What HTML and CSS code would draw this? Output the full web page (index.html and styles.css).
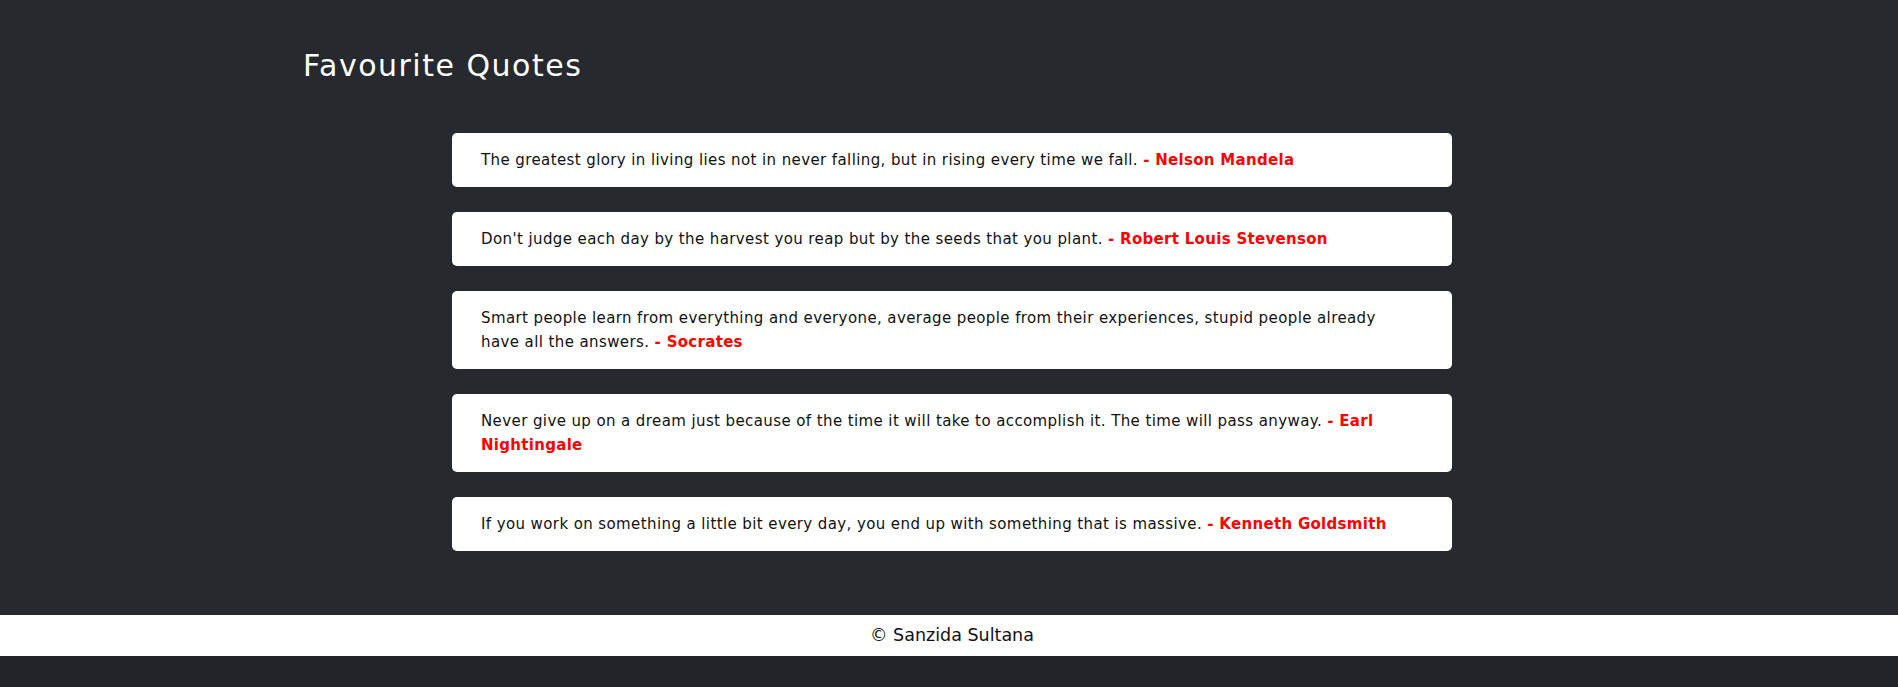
FILE: index.html
```html
<!DOCTYPE html>
<html lang="en">
<head>
<meta charset="utf-8">
<title>Favourite Quotes</title>
<link rel="stylesheet" href="styles.css">
</head>
<body>
<main class="quotes-section">
  <div class="container">
    <h1 class="title">Favourite Quotes</h1>
    <div class="quote-list">
      <div class="quote-card"><p>The greatest glory in living lies not in never falling, but in rising every time we fall. <strong>- Nelson Mandela</strong></p></div>
      <div class="quote-card"><p>Don't judge each day by the harvest you reap but by the seeds that you plant. <strong>- Robert Louis Stevenson</strong></p></div>
      <div class="quote-card"><p>Smart people learn from everything and everyone, average people from their experiences, stupid people already have all the answers. <strong>- Socrates</strong></p></div>
      <div class="quote-card"><p>Never give up on a dream just because of the time it will take to accomplish it. The time will pass anyway. <strong>- Earl Nightingale</strong></p></div>
      <div class="quote-card"><p>If you work on something a little bit every day, you end up with something that is massive. <strong>- Kenneth Goldsmith</strong></p></div>
    </div>
  </div>
</main>
<footer class="footer">
  <p>© Sanzida Sultana</p>
</footer>
</body>
</html>
```

FILE: styles.css
```css
* { box-sizing: border-box; }
html, body { margin: 0; padding: 0; }
body {
  background: #212529;
  font-family: "DejaVu Sans", "Liberation Sans", sans-serif;
  color: #000;
}
.quotes-section {
  background: #262a2e;
  padding: 48px 0 64px;
}
.container {
  max-width: 1320px;
  margin: 0 auto;
  padding: 0 12px;
}
.title {
  margin: 0 0 49px;
  padding-left: 2px;
  font-size: 30px;
  line-height: 36px;
  font-weight: 400;
  letter-spacing: 1.5px;
  color: #fff;
}
.quote-list {
  display: flex;
  flex-direction: column;
  align-items: center;
  gap: 25px;
  padding-left: 6px;
}
.quote-card {
  width: 1000px;
  background: #fff;
  border-radius: 5px;
  padding: 15px 40px 15px 29px;
}
.quote-card p {
  margin: 0;
  font-size: 15px;
  line-height: 24px;
  letter-spacing: 0.4px;
  color: #111;
}
.quote-card strong {
  color: #ff0000;
  font-weight: 700;
  letter-spacing: 0.3px;
}
.footer {
  background: #fff;
  text-align: center;
}
.footer p {
  margin: 0;
  padding-left: 6px;
  font-size: 17.5px;
  line-height: 41px;
  color: #111;
}
```
